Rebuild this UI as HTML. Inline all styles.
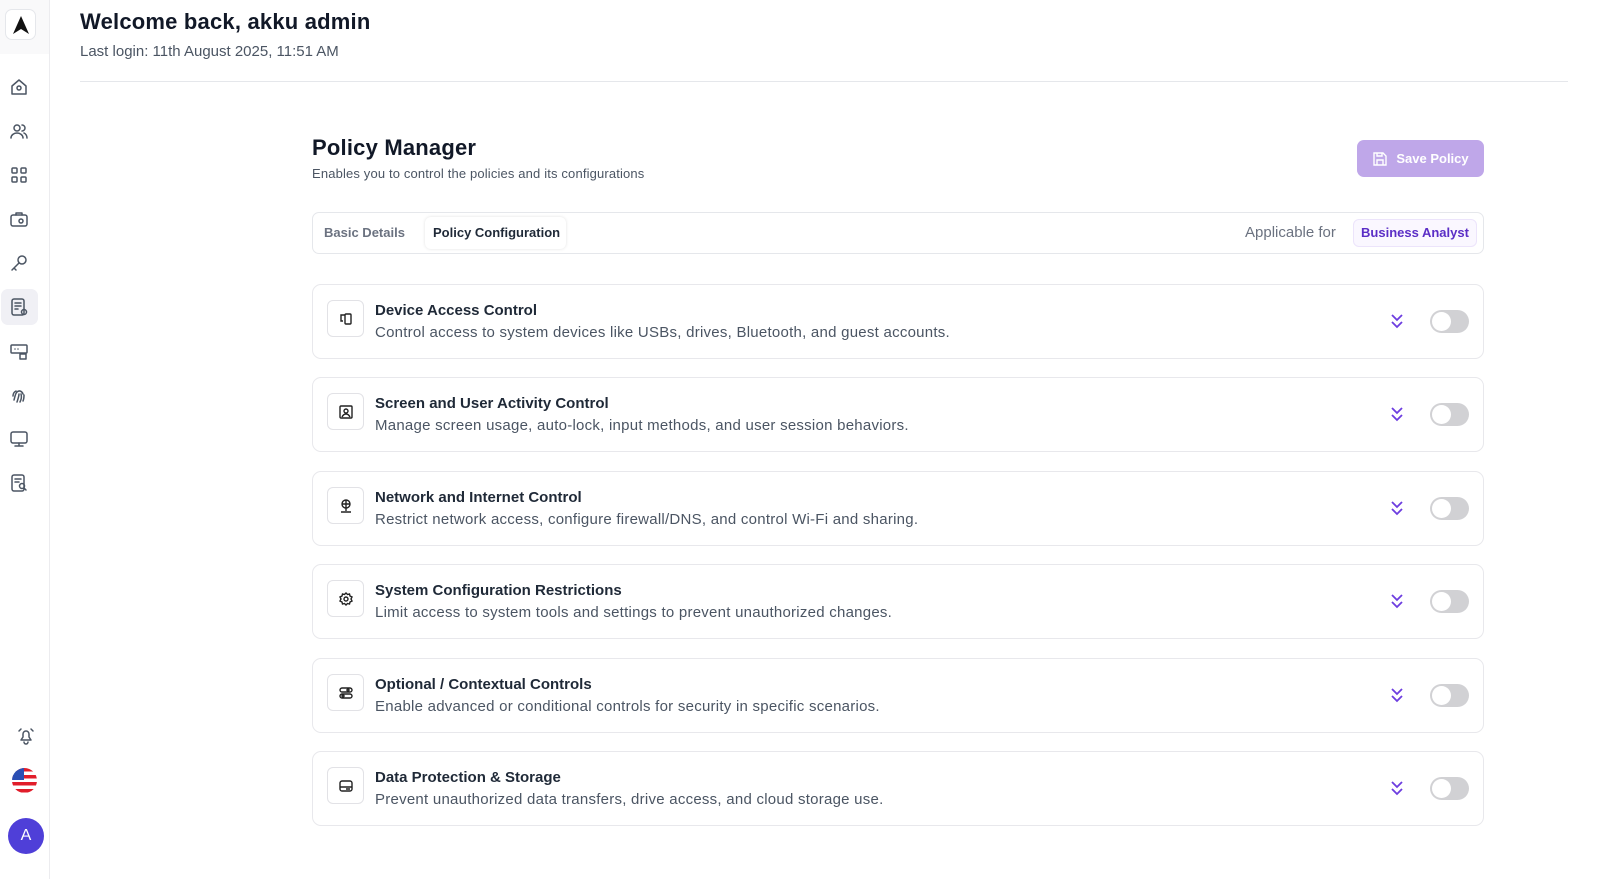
<!DOCTYPE html>
<html><head><style>
*{box-sizing:border-box;margin:0;padding:0}
body{width:1600px;height:879px;overflow:hidden;background:#fff;font-family:"Liberation Sans",sans-serif;color:#111827;position:relative}
.side{position:absolute;left:0;top:0;width:50px;height:879px;border-right:1px solid #ececef;background:#fff}
.side .top{height:54px;background:#f9f9fa}
.logo{position:absolute;left:5px;top:9px;width:31px;height:31px;border:1px solid #e5e7eb;border-radius:7px;background:#fff;display:flex;align-items:center;justify-content:center}
.ni{position:absolute;left:9px;width:20px;height:20px}
.ni svg{width:20px;height:20px;fill:none;stroke:#4b5563;stroke-width:1.5;stroke-linecap:round;stroke-linejoin:round}
.act{position:absolute;left:1px;top:289px;width:37px;height:36px;background:#f0f0f5;border-radius:7px}
.abs{position:absolute}
h1{position:absolute;left:80px;top:9px;font-size:22px;font-weight:600;letter-spacing:.2px}
.ll{position:absolute;left:80px;top:43px;font-size:15px;color:#4b5563}
.hr{position:absolute;left:80px;top:81px;width:1488px;height:1px;background:#e5e7eb}
.card{position:absolute;left:312px;width:1172px;height:75px;border:1px solid #e8e8ec;border-radius:9px}
.ib{position:absolute;left:14px;top:15px;width:37px;height:37px;border:1px solid #e2e2e6;border-radius:6px;display:flex;align-items:center;justify-content:center}
.ib svg{width:16px;height:16px;fill:none;stroke:#222;stroke-width:1.4}
.ct{position:absolute;left:62px;top:17px;font-size:15px;font-weight:600;color:#1f2937}
.cd{position:absolute;left:62px;top:39px;font-size:15px;color:#4b5563;letter-spacing:.25px}
.chev{position:absolute;left:1077px;top:27px}
.tg{position:absolute;left:1117px;top:25px;width:39px;height:23px;border-radius:12px;background:#d1d1d4}
.tg:after{content:"";position:absolute;left:2px;top:2px;width:19px;height:19px;border-radius:50%;background:#fff}
</style></head><body>
<div class="side"><div class="top"></div>
<div class="logo"><svg width="20" height="20" viewBox="0 0 20 20"><path d="M10 1 L18 19 L10 14 L2 19 Z" fill="#111"/></svg></div>
<div class="act"></div>
<div class="ni" style="top:77px"><svg viewBox="0 0 20 20"><path d="M3 9 L10 3 L17 9 V17 H3 Z"/><circle cx="10" cy="11" r="2"/></svg></div>
<div class="ni" style="top:121px"><svg viewBox="0 0 20 20"><circle cx="8" cy="7" r="3"/><path d="M2 17c0-3 3-5 6-5s6 2 6 5M13 4a3 3 0 010 6M15 12c2 1 3 3 3 5"/></svg></div>
<div class="ni" style="top:165px"><svg viewBox="0 0 20 20"><rect x="3" y="3" width="5" height="5" rx="1"/><rect x="12" y="3" width="5" height="5" rx="1"/><rect x="3" y="12" width="5" height="5" rx="1"/><rect x="12" y="12" width="5" height="5" rx="1"/></svg></div>
<div class="ni" style="top:209px"><svg viewBox="0 0 20 20"><rect x="2" y="6" width="16" height="11" rx="2"/><path d="M7 6V4h6v2"/><circle cx="12" cy="12" r="2"/></svg></div>
<div class="ni" style="top:253px"><svg viewBox="0 0 20 20"><circle cx="13" cy="7" r="4"/><path d="M10 10L3 17M5 15l2 2"/></svg></div>
<div class="ni" style="top:297px"><svg viewBox="0 0 20 20"><rect x="3" y="2" width="12" height="16" rx="2"/><path d="M6 6h6M6 9h6M6 12h3"/><circle cx="15" cy="15" r="2.5"/></svg></div>
<div class="ni" style="top:341px"><svg viewBox="0 0 20 20"><rect x="2" y="4" width="16" height="8" rx="1"/><rect x="11" y="13" width="6" height="5"/><path d="M6 8h.01M9 8h.01"/></svg></div>
<div class="ni" style="top:385px"><svg viewBox="0 0 20 20"><path d="M5 15c1-3 1-6 3-8s5-1 6 2M8 17c1-3 2-6 2-8M11 17c1-2 2-5 1-8M14 16c1-2 1-4 1-6M4 11c0-2 1-4 3-5"/></svg></div>
<div class="ni" style="top:429px"><svg viewBox="0 0 20 20"><rect x="2" y="3" width="16" height="11" rx="2"/><path d="M10 14v3M6 17h8"/></svg></div>
<div class="ni" style="top:473px"><svg viewBox="0 0 20 20"><rect x="3" y="2" width="12" height="16" rx="2"/><path d="M6 6h6M6 9h4"/><circle cx="13" cy="13" r="2.5"/><path d="M15 15l2 2"/></svg></div>
<div class="ni" style="top:726px;left:16px"><svg viewBox="0 0 20 20"><path d="M5 14h10l-2-3V8a3 3 0 00-6 0v3zM8 16a2 2 0 004 0M3 5l2-2M17 5l-2-2"/></svg></div>
<div class="abs" style="left:12px;top:768px;width:25px;height:25px;border-radius:50%;overflow:hidden;background:repeating-linear-gradient(#e11d2a 0 3.5px,#fff 3.5px 7px)"><div style="width:12px;height:12px;background:#2b4fb4"></div></div>
<div class="abs" style="left:8px;top:818px;width:36px;height:36px;border-radius:50%;background:#4f3fd8;color:#fff;font-size:16px;display:flex;align-items:center;justify-content:center">A</div>
</div>
<h1>Welcome back, akku admin</h1>
<div class="ll">Last login: 11th August 2025, 11:51 AM</div>
<div class="hr"></div>
<div class="abs" style="left:312px;top:135px;font-size:22px;font-weight:600;letter-spacing:.2px">Policy Manager</div>
<div class="abs" style="left:312px;top:166px;font-size:13px;color:#4b5563;letter-spacing:.15px">Enables you to control the policies and its configurations</div>
<div class="abs" style="left:1357px;top:140px;width:127px;height:37px;border-radius:7px;background:#bfa7e9;color:#fff;font-size:13px;font-weight:600;display:flex;align-items:center;justify-content:center;gap:8px"><svg width="16" height="16" viewBox="0 0 16 16" fill="none" stroke="#fff" stroke-width="1.4"><path d="M2 2h9l3 3v9H2z"/><path d="M5 2v3h5V2M5 14V9h6v5"/></svg>Save Policy</div>
<div class="abs" style="left:312px;top:212px;width:1172px;height:42px;border:1px solid #e5e7eb;border-radius:7px">
<div class="abs" style="left:11px;top:12px;font-size:13px;color:#6b7280;font-weight:600">Basic Details</div>
<div class="abs" style="left:112px;top:4px;width:141px;height:32px;border-radius:6px;box-shadow:0 0 3px rgba(0,0,0,.12);font-size:13px;font-weight:600;color:#1f2937;padding:8px 0 0 8px">Policy Configuration</div>
<div class="abs" style="left:932px;top:11px;font-size:15px;color:#6b7280">Applicable for</div>
<div class="abs" style="left:1040px;top:6px;width:124px;height:28px;border:1px solid #ece4fb;background:#faf7ff;border-radius:6px;font-size:13px;color:#5b2ec6;font-weight:600;text-align:center;line-height:26px">Business Analyst</div>
</div>
<div class="card" style="top:284px"><div class="ib"><svg viewBox="0 0 16 16"><rect x="7" y="3" width="6" height="10" rx="1"/><path d="M7 4H3v6h2M10 9h.01"/></svg></div><div class="ct">Device Access Control</div><div class="cd">Control access to system devices like USBs, drives, Bluetooth, and guest accounts.</div><svg class="chev" width="14" height="18" viewBox="0 0 14 18" fill="none" stroke="#6d3de0" stroke-width="1.8"><path d="M2 3l5 5 5-5M2 10l5 5 5-5"/></svg><div class="tg"></div></div>
<div class="card" style="top:377px"><div class="ib"><svg viewBox="0 0 16 16"><rect x="2" y="2" width="12" height="12" rx="1"/><circle cx="8" cy="7" r="2"/><path d="M4 13c1-2 2-3 4-3s3 1 4 3"/></svg></div><div class="ct">Screen and User Activity Control</div><div class="cd">Manage screen usage, auto-lock, input methods, and user session behaviors.</div><svg class="chev" width="14" height="18" viewBox="0 0 14 18" fill="none" stroke="#6d3de0" stroke-width="1.8"><path d="M2 3l5 5 5-5M2 10l5 5 5-5"/></svg><div class="tg"></div></div>
<div class="card" style="top:471px"><div class="ib"><svg viewBox="0 0 16 16"><circle cx="8" cy="6" r="4"/><path d="M4 6h8M8 2v8M8 10v3M3 14h10"/></svg></div><div class="ct">Network and Internet Control</div><div class="cd">Restrict network access, configure firewall/DNS, and control Wi-Fi and sharing.</div><svg class="chev" width="14" height="18" viewBox="0 0 14 18" fill="none" stroke="#6d3de0" stroke-width="1.8"><path d="M2 3l5 5 5-5M2 10l5 5 5-5"/></svg><div class="tg"></div></div>
<div class="card" style="top:564px"><div class="ib"><svg viewBox="0 0 16 16"><circle cx="8" cy="8" r="2"/><path d="M8 2l1.5 1.5 2-.5.5 2 2 1-1 2 1 2-2 1-.5 2-2-.5L8 14l-1.5-1.5-2 .5-.5-2-2-1 1-2-1-2 2-1 .5-2 2 .5z"/></svg></div><div class="ct">System Configuration Restrictions</div><div class="cd">Limit access to system tools and settings to prevent unauthorized changes.</div><svg class="chev" width="14" height="18" viewBox="0 0 14 18" fill="none" stroke="#6d3de0" stroke-width="1.8"><path d="M2 3l5 5 5-5M2 10l5 5 5-5"/></svg><div class="tg"></div></div>
<div class="card" style="top:658px"><div class="ib"><svg viewBox="0 0 16 16"><rect x="2" y="3" width="12" height="4" rx="2"/><rect x="2" y="9" width="12" height="4" rx="2"/><circle cx="10" cy="5" r="1"/><circle cx="5" cy="11" r="1"/></svg></div><div class="ct">Optional / Contextual Controls</div><div class="cd">Enable advanced or conditional controls for security in specific scenarios.</div><svg class="chev" width="14" height="18" viewBox="0 0 14 18" fill="none" stroke="#6d3de0" stroke-width="1.8"><path d="M2 3l5 5 5-5M2 10l5 5 5-5"/></svg><div class="tg"></div></div>
<div class="card" style="top:751px"><div class="ib"><svg viewBox="0 0 16 16"><rect x="2" y="3" width="12" height="10" rx="2"/><path d="M2 9h12M5 11h.01M8 11h4"/></svg></div><div class="ct">Data Protection &amp; Storage</div><div class="cd">Prevent unauthorized data transfers, drive access, and cloud storage use.</div><svg class="chev" width="14" height="18" viewBox="0 0 14 18" fill="none" stroke="#6d3de0" stroke-width="1.8"><path d="M2 3l5 5 5-5M2 10l5 5 5-5"/></svg><div class="tg"></div></div>
</body></html>
